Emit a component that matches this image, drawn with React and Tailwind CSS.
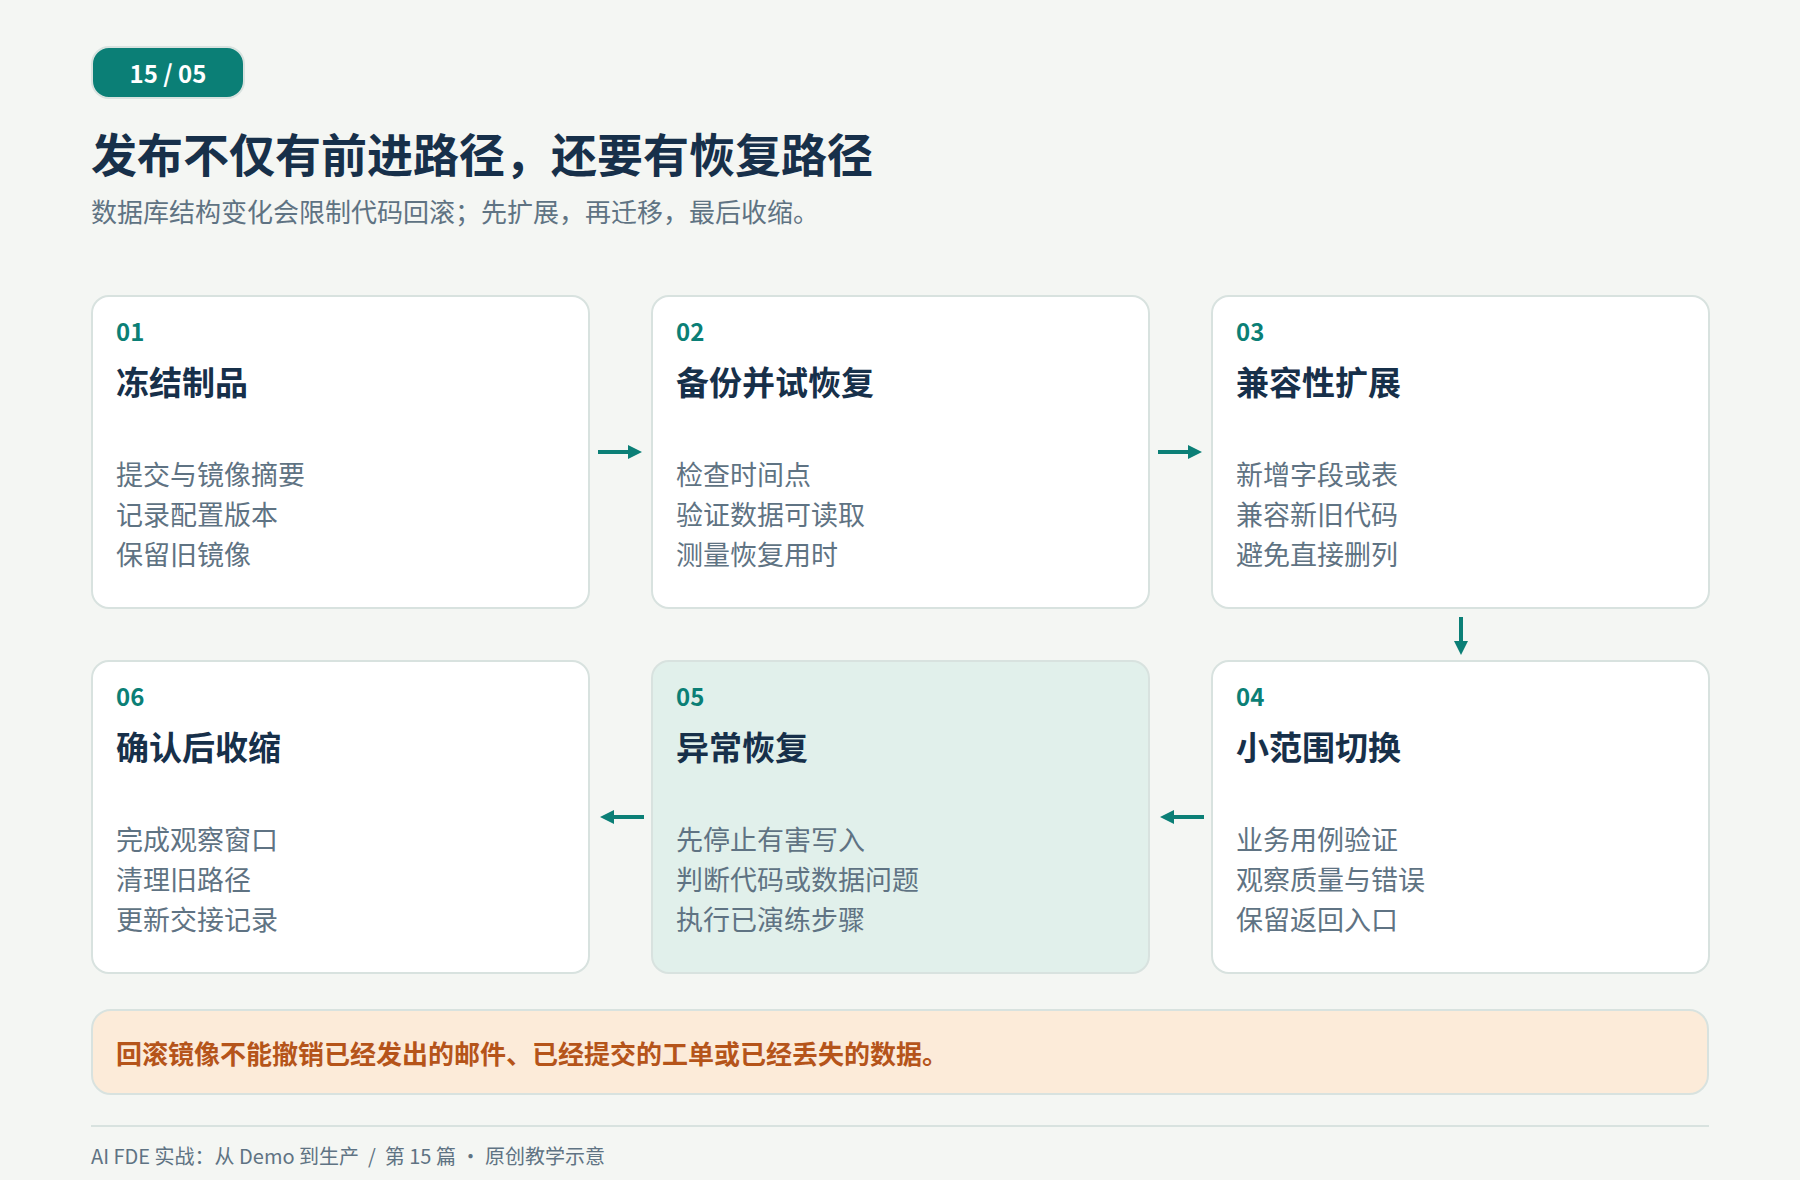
const font = { fontFamily: '"Noto Sans CJK SC", "Noto Sans", sans-serif' };

const steps = {
  '01': { title: '冻结制品', items: ['提交与镜像摘要', '记录配置版本', '保留旧镜像'] },
  '02': { title: '备份并试恢复', items: ['检查时间点', '验证数据可读取', '测量恢复用时'] },
  '03': { title: '兼容性扩展', items: ['新增字段或表', '兼容新旧代码', '避免直接删列'] },
  '04': { title: '小范围切换', items: ['业务用例验证', '观察质量与错误', '保留返回入口'] },
  '05': { title: '异常恢复', items: ['先停止有害写入', '判断代码或数据问题', '执行已演练步骤'], hl: true },
  '06': { title: '确认后收缩', items: ['完成观察窗口', '清理旧路径', '更新交接记录'] },
};

const Card = ({ n }) => {
  const s = steps[n];
  return (
    <div className={`h-[314px] rounded-[18px] border-2 border-[#d8e2df] px-[23px] pt-[17px] ${s.hl ? 'bg-[#e1f0eb]' : 'bg-white'}`}>
      <div className="text-[24px] font-bold leading-[34px] text-[#0b7f76]">{n}</div>
      <div className="mt-[12px] text-[33px] font-bold leading-[42px] text-[#17304a]">{s.title}</div>
      <div className="mt-[52px] text-[27px] leading-[40px] text-[#5f7383]">
        {s.items.map((t) => (
          <div key={t}>{t}</div>
        ))}
      </div>
    </div>
  );
};

const Arrow = ({ dir }) => {
  const rot = { right: 'rotate-0', left: 'rotate-180', down: 'rotate-90' }[dir];
  return (
    <div className="flex items-center justify-center">
      <svg width="46" height="20" viewBox="0 0 46 20" className={rot}>
        <line x1="0" y1="10" x2="34" y2="10" stroke="#0b7f76" strokeWidth="4" />
        <path d="M30 3 L44 10 L30 17 Z" fill="#0b7f76" />
      </svg>
    </div>
  );
};

export default function App() {
  return (
    <div className="min-h-[1180px] w-[1800px] bg-[#f4f6f3] px-[91px] pt-[46px]" style={font}>
      <div className="flex h-[53px] w-[154px] items-center justify-center rounded-[18px] border-2 border-[#d8e2df] bg-[#0b7f76] text-[24px] font-bold text-white">
        15 / 05
      </div>
      <h1 className="mt-[22px] text-[46px] font-bold leading-[62px] text-[#17304a]">发布不仅有前进路径，还要有恢复路径</h1>
      <p className="mt-[10px] text-[26px] leading-[36px] text-[#5f7383]">数据库结构变化会限制代码回滚；先扩展，再迁移，最后收缩。</p>

      <div className="mt-[66px] grid grid-cols-[499px_61px_499px_61px_499px]">
        <Card n="01" />
        <Arrow dir="right" />
        <Card n="02" />
        <Arrow dir="right" />
        <Card n="03" />
        <div className="col-span-4 h-[51px]" />
        <div className="flex h-[51px] items-center justify-center">
          <svg width="20" height="40" viewBox="0 0 20 40">
            <line x1="10" y1="2" x2="10" y2="30" stroke="#0b7f76" strokeWidth="4" />
            <path d="M3 26 L10 40 L17 26 Z" fill="#0b7f76" />
          </svg>
        </div>
        <Card n="06" />
        <Arrow dir="left" />
        <Card n="05" />
        <Arrow dir="left" />
        <Card n="04" />
      </div>

      <div className="mt-[35px] flex h-[86px] items-center rounded-[20px] border-2 border-[#d8e2df] bg-[#fcebd9] px-[23px] text-[26px] font-bold text-[#b5541a]">
        回滚镜像不能撤销已经发出的邮件、已经提交的工单或已经丢失的数据。
      </div>

      <div className="mt-[30px] border-t-2 border-[#d8e2df] pt-[14px] text-[20px] text-[#5f7383]">
        AI FDE 实战：从 Demo 到生产 &nbsp;/&nbsp; 第 15 篇 · 原创教学示意
      </div>
    </div>
  );
}
